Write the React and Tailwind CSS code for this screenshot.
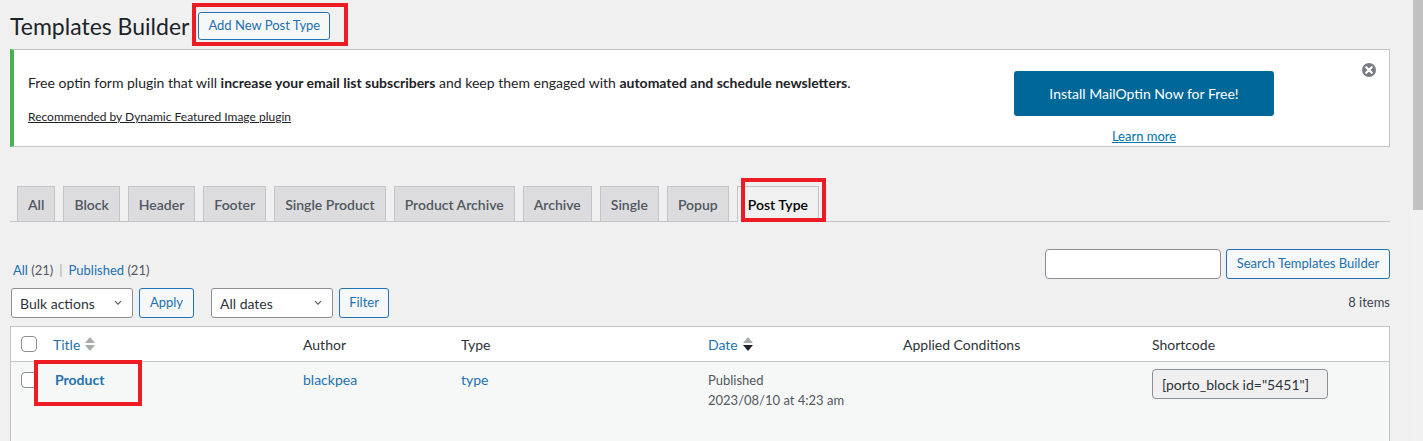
import React from "react";

const TABS = ["All", "Block", "Header", "Footer", "Single Product", "Product Archive", "Archive", "Single", "Popup"];

function RedBox({ className }) {
  return <div className={`absolute border-4 border-[#ed1c24] pointer-events-none ${className}`} />;
}

function Chevron() {
  return (
    <svg width="12" height="12" viewBox="0 0 20 20" className="text-[#50575e]">
      <path d="M5 7l5 5 5-5" fill="none" stroke="currentColor" strokeWidth="2" />
    </svg>
  );
}

function Select({ label }) {
  return (
    <div className="w-[122px] h-[30px] flex items-center justify-between pl-[8px] pr-[8px] bg-white border border-[#8c8f94] rounded-[3px] text-[14px] text-[#2c3338]">
      <span>{label}</span>
      <Chevron />
    </div>
  );
}

function Btn({ children, className = "" }) {
  return (
    <button className={`h-[30px] px-[8px] whitespace-nowrap bg-[#f6f7f7] border border-[#2271b1] rounded-[3px] text-[13px] text-[#2271b1] ${className}`}>
      {children}
    </button>
  );
}

function Check() {
  return <span className="block w-[16px] h-[16px] bg-white border border-[#8c8f94] rounded-[4px]" />;
}

export default function App() {
  return (
    <div className="w-[1423px] h-[441px] overflow-hidden flex bg-[#f0f0f1] text-[#3c434a]" style={{ fontFamily: "Lato, 'Noto Sans', sans-serif" }}>
      <div className="flex-1 pl-[10px] pr-[23px]">
        {/* Heading */}
        <div className="flex items-center gap-[9px] pt-[11px]">
          <h1 className="text-[23px] leading-[30px] text-[#1d2327]">Templates Builder</h1>
          <div className="relative">
            <button className="h-[28px] px-[9px] bg-[#f6f7f7] border border-[#2271b1] rounded-[3px] text-[13px] text-[#2271b1]">
              Add New Post Type
            </button>
            <RedBox className="-left-[6px] -top-[9px] -right-[18px] -bottom-[6px]" />
          </div>
        </div>

        {/* Notice */}
        <div className="relative mt-[8px] h-[98px] flex bg-white border border-[#c3c4c7] border-l-4 border-l-[#46b450]">
          <div className="flex-1 pl-[14px] pt-[23px]">
            <p className="text-[14px] leading-[20px] text-[#1d2327]">
              Free optin form plugin that will <b>increase your email list subscribers</b> and keep them engaged with{" "}
              <b>automated and schedule newsletters</b>.
            </p>
            <p className="mt-[15px] text-[12px] leading-[18px] text-[#1d2327] underline">Recommended by Dynamic Featured Image plugin</p>
          </div>
          <div className="w-[260px] mr-[115px] pt-[21px] flex flex-col items-center">
            <div className="w-[260px] h-[45px] flex items-center justify-center bg-[#006799] rounded-[3px] text-white text-[14px]">
              Install MailOptin Now for Free!
            </div>
            <span className="mt-[11px] text-[13px] leading-[18px] text-[#0073aa] underline">Learn more</span>
          </div>
          <svg width="14" height="14" viewBox="0 0 20 20" className="absolute right-[13px] top-[13px]">
            <circle cx="10" cy="10" r="10" fill="#787c82" />
            <path d="M6 6l8 8M14 6l-8 8" stroke="#fff" strokeWidth="3" strokeLinecap="round" />
          </svg>
        </div>

        {/* Tabs */}
        <div className="mt-[39px] flex items-end gap-[8px] pl-[7px] border-b border-[#c3c4c7] h-[36px]">
          {TABS.map((t) => (
            <div key={t} className="h-[35px] px-[10px] flex items-center bg-[#dcdcde] border border-b-0 border-[#c3c4c7] text-[14px] font-semibold text-[#50575e]">
              {t}
            </div>
          ))}
          <div className="relative h-[36px] -mb-px px-[10px] flex items-center bg-[#f0f0f1] border border-b-0 border-[#c3c4c7] text-[14px] font-semibold text-black">
            Post Type
            <RedBox className="left-[3px] -top-[9px] -right-[8px] bottom-0" />
          </div>
        </div>

        {/* Subsubsub + search */}
        <div className="mt-[27px] flex justify-between items-start">
          <div className="mt-[11px] text-[13px] leading-[20px] pl-[3px]">
            <span className="text-[#2271b1]">All <span className="text-[#50575e]">(21)</span></span>
            <span className="text-[#a7aaad] mx-[6px]">|</span>
            <span className="text-[#2271b1]">Published <span className="text-[#50575e]">(21)</span></span>
          </div>
          <div className="flex gap-[5px]">
            <div className="w-[176px] h-[30px] bg-white border border-[#8c8f94] rounded-[4px]" />
            <Btn className="w-[164px]">Search Templates Builder</Btn>
          </div>
        </div>

        {/* Tablenav */}
        <div className="mt-[8px] flex items-center justify-between pl-[1px]">
          <div className="flex items-center">
            <Select label="Bulk actions" />
            <Btn className="ml-[6px] w-[55px]">Apply</Btn>
            <div className="ml-[17px]">
              <Select label="All dates" />
            </div>
            <Btn className="ml-[6px] w-[50px]">Filter</Btn>
          </div>
          <span className="text-[13px] text-[#3c434a]">8 items</span>
        </div>

        {/* Table */}
        <div className="mt-[8px] border border-[#c3c4c7] bg-white">
          <div className="grid grid-cols-[42px_250px_158px_247px_195px_249px_1fr] h-[35px] items-center border-b border-[#c3c4c7] text-[14px] text-[#2c3338]">
            <div className="pl-[10px]"><Check /></div>
            <div className="flex items-center gap-[5px] text-[#2271b1]">
              Title
              <svg width="10" height="14" viewBox="0 0 10 14">
                <path d="M5 0l5 6H0z M5 14L0 8h10z" fill="#a7aaad" />
              </svg>
            </div>
            <div>Author</div>
            <div>Type</div>
            <div className="flex items-center gap-[5px] text-[#2271b1]">
              Date
              <svg width="10" height="14" viewBox="0 0 10 14">
                <path d="M5 0l5 6H0z" fill="#a7aaad" />
                <path d="M5 14L0 8h10z" fill="#1d2327" />
              </svg>
            </div>
            <div>Applied Conditions</div>
            <div>Shortcode</div>
          </div>
          <div className="grid grid-cols-[42px_250px_158px_247px_195px_249px_1fr] h-[90px] items-start pt-[8px] bg-[#f6f7f7] text-[14px]">
            <div className="pl-[10px] pt-[2px]"><Check /></div>
            <div className="relative pl-[2px] leading-[20px] font-bold text-[#2271b1]">
              Product
              <RedBox className="-left-[19px] -top-[10px] w-[108px] h-[46px]" />
            </div>
            <div className="leading-[20px] text-[#2271b1]">blackpea</div>
            <div className="leading-[20px] text-[#2271b1]">type</div>
            <div className="text-[13px] leading-[20px] text-[#50575e]">
              <div>Published</div>
              <div>2023/08/10 at 4:23 am</div>
            </div>
            <div />
            <div className="-mt-[1px]">
              <div className="w-[176px] h-[30px] flex items-center pl-[9px] bg-[#f0f0f1] border border-[#8c8f94] rounded-[4px] text-[14px] text-[#2c3338]">
                [porto_block id="5451"]
              </div>
            </div>
          </div>
        </div>
      </div>

      {/* scrollbar */}
      <div className="w-[10px] bg-[#f1f1f1]">
        <div className="h-[210px] bg-[#c1c1c1]" />
      </div>
    </div>
  );
}
